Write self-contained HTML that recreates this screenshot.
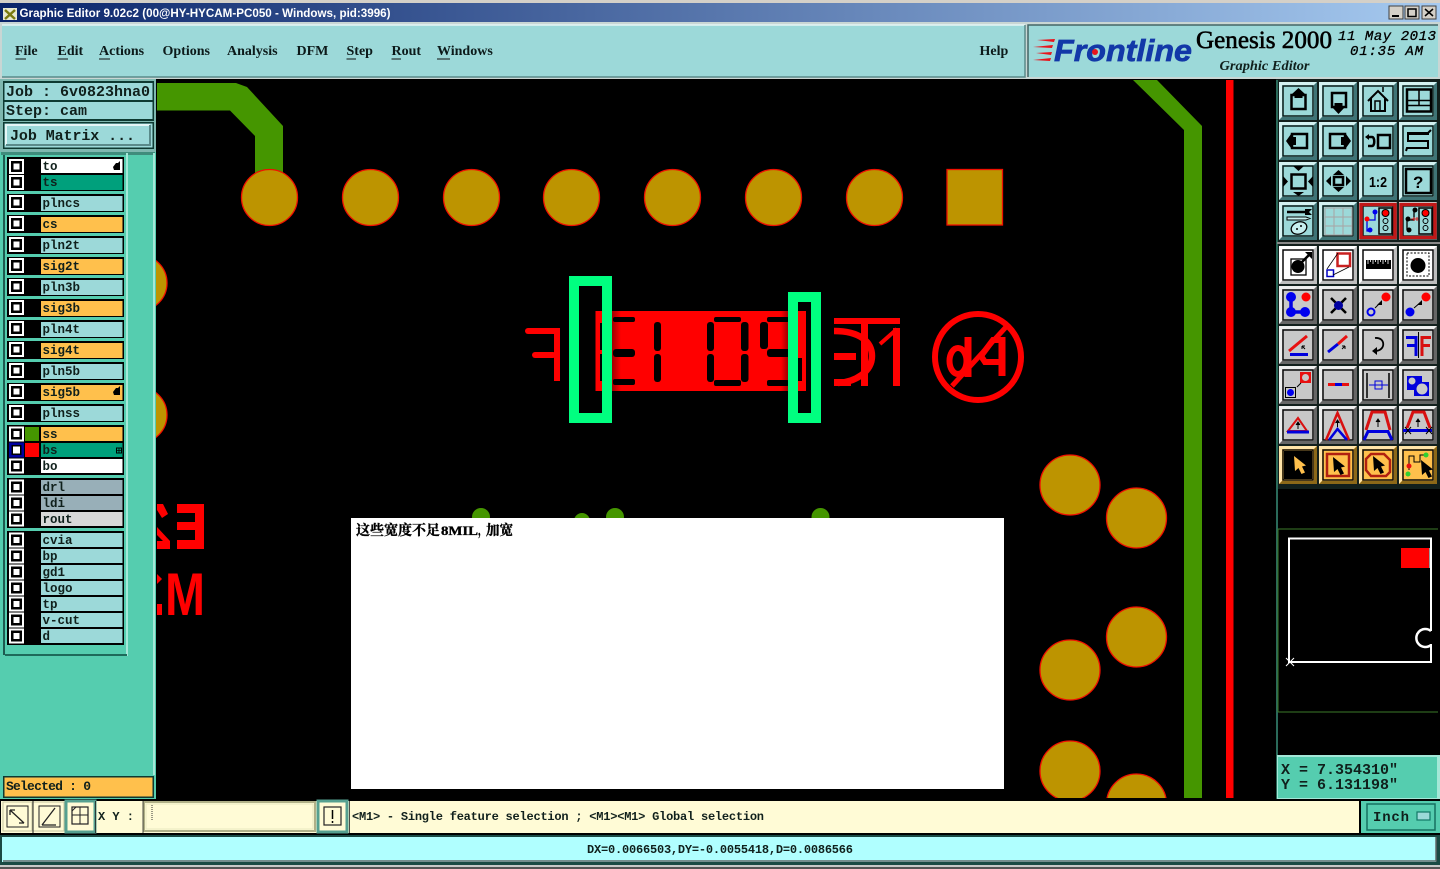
<!DOCTYPE html>
<html><head><meta charset="utf-8"><title>Graphic Editor</title>
<style>
html,body{margin:0;padding:0;background:#000;width:1440px;height:869px;overflow:hidden}
svg{display:block;position:absolute;left:0;top:0}
.m{font-family:"Liberation Mono","Noto Sans CJK SC",monospace;font-weight:bold;fill:#10201c}
.l{font-size:12.5px}
.s{font-family:"Liberation Serif",serif;font-weight:bold;font-size:14px;fill:#0c1a1a}
.p{fill:#bd9400;stroke:#f01000;stroke-width:1.3}
</style></head><body>
<svg width="1440" height="869" viewBox="0 0 1440 869" xmlns="http://www.w3.org/2000/svg">
<defs>
<linearGradient id="tb" x1="0" x2="1" y1="0" y2="0"><stop offset="0" stop-color="#0a246a"/><stop offset="1" stop-color="#a6caf0"/></linearGradient>
<linearGradient id="sh1" x1="0" x2="1" y1="0" y2="0"><stop offset="0" stop-color="#a00000"/><stop offset="1" stop-color="#ff0000"/></linearGradient>
<linearGradient id="sh2" x1="1" x2="0" y1="0" y2="0"><stop offset="0" stop-color="#a00000"/><stop offset="1" stop-color="#ff0000"/></linearGradient>
<g id="cb"><rect width="15" height="15" fill="#fff"/><rect x="2" y="2" width="11" height="11" fill="#000"/><rect x="4.500" y="4.500" width="6" height="6" fill="#fff"/></g>
<g id="bt"><rect width="38" height="38" fill="#9cd9d9"/><path d="M0 0H38L35 3H3V35L0 38Z" fill="#d4f2f2"/><path d="M38 38H0L3 35H35V3L38 0Z" fill="#3f7476"/><rect x="4" y="4" width="30" height="30" fill="none" stroke="#0a1a18" stroke-width="1.500"/></g>
<g id="bg"><rect width="38" height="38" fill="#c8c8c8"/><path d="M0 0H38L35 3H3V35L0 38Z" fill="#eeeeee"/><path d="M38 38H0L3 35H35V3L38 0Z" fill="#666"/><rect x="4" y="4" width="30" height="30" fill="none" stroke="#0a0a0a" stroke-width="1.500"/></g>
<g id="bw"><rect width="38" height="38" fill="#fff"/><path d="M38 38H0L3 35H35V3L38 0Z" fill="#bdbdbd"/><rect x="4" y="4" width="30" height="30" fill="none" stroke="#0a0a0a" stroke-width="1.500"/></g>
<g id="bo"><rect width="38" height="38" fill="#ffc04c"/><path d="M0 0H38L35 3H3V35L0 38Z" fill="#ffe4a8"/><path d="M38 38H0L3 35H35V3L38 0Z" fill="#8c6818"/><rect x="4" y="4" width="30" height="30" fill="none" stroke="#0a0a0a" stroke-width="1.500"/></g>
<path id="cur" d="M0 0L1 15L4.500 12L7.500 18L11 16.500L8 10.500L12 9.500Z"/>
</defs>

<!-- window chrome -->
<rect width="1440" height="869" fill="#d4d0c8"/>
<rect x="0" y="3" width="1440" height="19" fill="url(#tb)"/>
<rect x="3" y="8" width="14" height="12" fill="#e8e8d0"/><path d="M5 10L15 19M15 10L5 19" stroke="#7a7a10" stroke-width="2.500"/>
<text x="19.500" y="17" font-family="Liberation Sans,sans-serif" font-weight="bold" font-size="11.500" fill="#fff" textLength="371" lengthAdjust="spacingAndGlyphs">Graphic Editor 9.02c2 (00@HY-HYCAM-PC050 - Windows, pid:3996)</text>
<g fill="#d4d0c8" stroke="#404040" stroke-width="1">
<rect x="1389" y="6" width="14" height="13"/><rect x="1405" y="6" width="14" height="13"/><rect x="1422" y="6" width="14" height="13"/></g>
<path d="M1392 16H1399" stroke="#000" stroke-width="2"/><rect x="1408" y="9" width="8" height="7.500" fill="none" stroke="#000" stroke-width="1.500"/><path d="M1425 9L1433 16M1433 9L1425 16" stroke="#000" stroke-width="1.500"/>

<!-- menu bar -->
<rect x="0" y="22" width="1440" height="58" fill="#c9d6d4"/>
<rect x="2" y="25" width="1023" height="52" fill="#9cd9d9"/>
<path d="M2 25H1025" stroke="#e4f6f6" stroke-width="1.500"/>
<path d="M2 77H1025V25" stroke="#5a8a8a" fill="none" stroke-width="1.500"/>
<rect x="1028" y="25" width="410" height="52" fill="#9cd9d9"/>
<path d="M1028 77V25H1438" stroke="#466" fill="none" stroke-width="1.500"/>
<g class="s">
<text class="s" x="15" y="55">File</text><path d="M15.500 59H26" stroke="#111"/>
<text class="s" x="57.500" y="55">Edit</text><path d="M57.500 59H68" stroke="#111"/>
<text class="s" x="99" y="55">Actions</text><path d="M99 59H110" stroke="#111"/>
<text class="s" x="162.500" y="55">Options</text>
<text class="s" x="227" y="55">Analysis</text>
<text class="s" x="296.500" y="55">DFM</text>
<text class="s" x="346.500" y="55">Step</text><path d="M346.500 59H356" stroke="#111"/>
<text class="s" x="391.500" y="55">Rout</text><path d="M391.500 59H401" stroke="#111"/>
<text class="s" x="437" y="55">Windows</text><path d="M437 59H450" stroke="#111"/>
<text class="s" x="979.500" y="55">Help</text>
</g>
<!-- logo -->
<g fill="#e8141c"><polygon points="1037,40 1055,39 1054,42"/><polygon points="1033,47 1053,45 1052,48"/><polygon points="1036,53 1052,52 1051,55"/><polygon points="1033,60 1051,58 1050,61"/></g>
<text x="1054" y="61" font-family="Liberation Sans,sans-serif" font-weight="bold" font-style="italic" font-size="31" fill="#1238a8" stroke="#1238a8" stroke-width=".7" textLength="138" lengthAdjust="spacingAndGlyphs">Frontline</text>
<circle cx="1095" cy="52" r="3" fill="#e8141c"/>
<text x="1196" y="48" font-family="Liberation Serif,serif" font-size="25" fill="#000" stroke="#000" stroke-width=".6" textLength="136" lengthAdjust="spacingAndGlyphs">Genesis 2000</text>
<text x="1219.500" y="70" font-family="Liberation Serif,serif" font-weight="bold" font-style="italic" font-size="14" fill="#10201c" textLength="90" lengthAdjust="spacingAndGlyphs">Graphic Editor</text>
<text x="1338" y="40" font-family="Liberation Mono,monospace" font-style="italic" font-size="14" fill="#000" stroke="#000" stroke-width=".3" textLength="98">11 May 2013</text>
<text x="1350" y="55" font-family="Liberation Mono,monospace" font-style="italic" font-size="14" fill="#000" stroke="#000" stroke-width=".3" textLength="73">01:35 AM</text>

<!-- canvas -->
<rect x="0" y="79" width="1440" height="722" fill="#000"/>
<polygon points="157,83 236,83 247,87 283,126 283,178 255,178 255,136 230,110.500 157,110.500" fill="#459600"/>
<polygon points="1133,80 1157,80 1202,126 1202,798 1184,798 1184,130" fill="#459600"/>
<rect x="1226" y="80" width="7.500" height="718" fill="#ff0000"/>
<circle class="p" cx="269.500" cy="197.500" r="28"/><circle class="p" cx="370.500" cy="197.500" r="28"/><circle class="p" cx="471.500" cy="197.500" r="28"/><circle class="p" cx="571.500" cy="197.500" r="28"/><circle class="p" cx="672.500" cy="197.500" r="28"/><circle class="p" cx="773.500" cy="197.500" r="28"/><circle class="p" cx="874.500" cy="197.500" r="28"/>
<rect class="p" x="947" y="169.500" width="55.500" height="55.500"/>
<circle class="p" cx="139" cy="283" r="28"/><circle class="p" cx="139" cy="415" r="28"/>
<circle class="p" cx="1070" cy="485" r="30"/><circle class="p" cx="1136.500" cy="518" r="30"/><circle class="p" cx="1136.500" cy="637" r="30"/><circle class="p" cx="1070" cy="670" r="30"/><circle class="p" cx="1070" cy="771" r="30"/><circle class="p" cx="1136.500" cy="804" r="30"/>
<rect x="1040" y="798" width="130" height="4" fill="#000"/>
<circle cx="481" cy="517" r="9" fill="#459600"/><circle cx="582" cy="521" r="8" fill="#459600"/><circle cx="615" cy="517" r="9" fill="#459600"/><circle cx="820.500" cy="517" r="9" fill="#459600"/>

<!-- silkscreen -->
<rect x="595.500" y="311" width="210.500" height="80" fill="#ff0000"/>
<rect x="612" y="311" width="9" height="80" fill="url(#sh1)"/><rect x="781" y="311" width="7" height="80" fill="url(#sh2)"/>
<g fill="#000">
<rect x="613" y="317" width="22" height="5" rx="2"/><rect x="613" y="349" width="22" height="8" rx="3"/><rect x="613" y="379" width="22" height="6" rx="2"/>
<rect x="600" y="323" width="4" height="27"/><rect x="600" y="354" width="4" height="27"/>
<rect x="654" y="322" width="7" height="29" rx="3"/><rect x="654" y="354" width="7" height="28" rx="3"/>
<rect x="707" y="322" width="7" height="29" rx="3"/><rect x="707" y="354" width="7" height="28" rx="3"/>
<rect x="741" y="322" width="7.500" height="29" rx="3"/><rect x="741" y="354" width="7.500" height="28" rx="3"/>
<rect x="714" y="317" width="27" height="5" rx="2"/><rect x="714" y="380" width="27" height="6" rx="2"/>
<rect x="767" y="317" width="22" height="5" rx="2"/><rect x="760" y="322" width="8" height="27" rx="3"/><rect x="767" y="349" width="30" height="8" rx="3"/><rect x="767" y="380" width="22" height="6" rx="2"/><rect x="798" y="358" width="4" height="23"/>
</g>
<rect x="574" y="281" width="33" height="137" fill="none" stroke="#00ff80" stroke-width="10"/>
<rect x="793" y="297" width="23" height="121" fill="none" stroke="#00ff80" stroke-width="10"/>
<g fill="#ff0000">
<rect x="525" y="328" width="35" height="6" rx="3"/><rect x="532" y="352" width="24" height="6" rx="3"/><rect x="554" y="328" width="6" height="53"/>
<rect x="834" y="318" width="66" height="6"/><rect x="834" y="353" width="22" height="7"/><rect x="834" y="379" width="17" height="7"/><rect x="861" y="324" width="7" height="62"/><rect x="893" y="328" width="7" height="58"/>
</g>
<path d="M834 331C860 331 872 342 872 356C872 372 855 382 838 383" fill="none" stroke="#ff0000" stroke-width="6.500"/>
<path d="M880 344L897 329" stroke="#ff0000" stroke-width="4"/>
<circle cx="978" cy="357" r="43" fill="none" stroke="#ff0000" stroke-width="6"/>
<path d="M1006 327L952 386" stroke="#ff0000" stroke-width="5"/>
<path d="M968 337V377" stroke="#ff0000" stroke-width="7"/>
<ellipse cx="958" cy="361" rx="8.500" ry="13" fill="none" stroke="#ff0000" stroke-width="6"/>
<path d="M1002 337V376" stroke="#ff0000" stroke-width="7"/>
<path d="M1002 340H993L981 356L985 362H1002" fill="none" stroke="#ff0000" stroke-width="6"/>
<g fill="#ff0000">
<rect x="177" y="504" width="27" height="9"/><rect x="177" y="522" width="27" height="8"/><rect x="177" y="540" width="27" height="9"/><rect x="195" y="504" width="9" height="45"/>
<polygon points="157,574 162,579 157,584"/><rect x="157" y="604" width="5" height="11"/>
<polygon points="157,504 163,504 168,514 162,518 157,510"/>
<polygon points="157,527 170,541 170,549 157,549 157,541 163,541 157,535"/>
</g>
<text x="165" y="615" font-family="Liberation Sans,sans-serif" font-weight="bold" font-size="60" fill="#ff0000" textLength="40" lengthAdjust="spacingAndGlyphs">M</text>

<!-- popup -->
<rect x="351" y="518" width="653" height="271" fill="#fff"/>
<g font-family="Liberation Serif,'Noto Serif CJK SC',serif" font-weight="bold" font-size="14" fill="#000" stroke="#000" stroke-width=".35">
<text x="356" y="535" textLength="84" lengthAdjust="spacingAndGlyphs">这些宽度不足</text>
<text x="441" y="535" font-size="13" textLength="37" lengthAdjust="spacingAndGlyphs">8MIL</text>
<text x="478" y="535" textLength="9" lengthAdjust="spacingAndGlyphs">，</text>
<text x="486" y="535" textLength="27" lengthAdjust="spacingAndGlyphs">加宽</text>
</g>

<!-- left panel -->
<rect x="0" y="79" width="156" height="722" fill="#55cdaf"/>
<rect x="0" y="79" width="156" height="73" fill="#7fb8b0"/>
<rect x="3" y="81" width="151" height="40" fill="#0e3a32"/>
<rect x="4.500" y="83" width="148" height="17" fill="#9cd9d9"/><rect x="4.500" y="102" width="148" height="17" fill="#9cd9d9"/>
<text class="m" x="6" y="96" font-size="15" textLength="144">Job : 6v0823hna0</text>
<text class="m" x="6" y="115" font-size="15" textLength="81">Step: cam</text>
<rect x="3" y="122" width="151" height="27" fill="#0e3a32"/><rect x="4.500" y="123.500" width="148" height="24" fill="#9cd9d9"/>
<rect x="6" y="125" width="144" height="20" fill="#9cd9d9"/><path d="M6 145V125H150" stroke="#e4f6f6" stroke-width="2" fill="none"/><path d="M6 145H150V125" stroke="#5a8a8a" stroke-width="2" fill="none"/>
<text class="m" x="10" y="140" font-size="15" textLength="125">Job Matrix ...</text>
<rect x="1" y="152" width="154" height="3" fill="#3f8c7c"/>
<rect x="3" y="155" width="2" height="500" fill="#1e5a50"/>
<rect x="126" y="153" width="2" height="503" fill="#a4e8d8"/>
<rect x="153" y="153" width="2" height="622" fill="#a4e8d8"/>
<rect x="5" y="654" width="122" height="2" fill="#1e6a5a"/>

<g fill="#000">
<rect x="7" y="157" width="117" height="34"/>
<rect x="7" y="194" width="117" height="18"/><rect x="7" y="215" width="117" height="18"/><rect x="7" y="236" width="117" height="18"/><rect x="7" y="257" width="117" height="18"/><rect x="7" y="278" width="117" height="18"/><rect x="7" y="299" width="117" height="18"/><rect x="7" y="320" width="117" height="18"/><rect x="7" y="341" width="117" height="18"/><rect x="7" y="362" width="117" height="18"/><rect x="7" y="383" width="117" height="18"/><rect x="7" y="404" width="117" height="18"/>
<rect x="7" y="425" width="117" height="50"/><rect x="7" y="478" width="117" height="50"/><rect x="7" y="531" width="117" height="114"/>
</g>
<g>
<rect x="41" y="159" width="81.500" height="14" fill="#fff"/><rect x="41" y="175" width="81.500" height="15" fill="#00a07c"/>
<rect x="41" y="196" width="81.500" height="15" fill="#9cd9d9"/><rect x="41" y="217" width="81.500" height="15" fill="#ffc04c"/><rect x="41" y="238" width="81.500" height="15" fill="#9cd9d9"/><rect x="41" y="259" width="81.500" height="15" fill="#ffc04c"/><rect x="41" y="280" width="81.500" height="15" fill="#9cd9d9"/><rect x="41" y="301" width="81.500" height="15" fill="#ffc04c"/><rect x="41" y="322" width="81.500" height="15" fill="#9cd9d9"/><rect x="41" y="343" width="81.500" height="15" fill="#ffc04c"/><rect x="41" y="364" width="81.500" height="15" fill="#9cd9d9"/><rect x="41" y="385" width="81.500" height="15" fill="#ffc04c"/><rect x="41" y="406" width="81.500" height="15" fill="#9cd9d9"/>
<rect x="41" y="427" width="81.500" height="14" fill="#ffc04c"/><rect x="41" y="443" width="81.500" height="14" fill="#00a07c"/><rect x="41" y="459" width="81.500" height="14" fill="#fff"/>
<rect x="41" y="480" width="81.500" height="14" fill="#98afb8"/><rect x="41" y="496" width="81.500" height="14" fill="#98afb8"/><rect x="41" y="512" width="81.500" height="14" fill="#d8d8d8"/>
<rect x="41" y="533" width="81.500" height="14" fill="#9cd9d9"/><rect x="41" y="549" width="81.500" height="14" fill="#9cd9d9"/><rect x="41" y="565" width="81.500" height="14" fill="#9cd9d9"/><rect x="41" y="581" width="81.500" height="14" fill="#9cd9d9"/><rect x="41" y="597" width="81.500" height="14" fill="#9cd9d9"/><rect x="41" y="613" width="81.500" height="14" fill="#9cd9d9"/><rect x="41" y="629" width="81.500" height="14" fill="#9cd9d9"/>
<rect x="25" y="427" width="14" height="14" fill="#459600"/><rect x="25" y="443" width="14" height="14" fill="#ff0000"/>
</g>
<use href="#cb" x="9" y="159"/><use href="#cb" x="9" y="175"/><use href="#cb" x="9" y="195"/><use href="#cb" x="9" y="216"/><use href="#cb" x="9" y="237"/><use href="#cb" x="9" y="258"/><use href="#cb" x="9" y="279"/><use href="#cb" x="9" y="300"/><use href="#cb" x="9" y="321"/><use href="#cb" x="9" y="342"/><use href="#cb" x="9" y="363"/><use href="#cb" x="9" y="384"/><use href="#cb" x="9" y="405"/>
<use href="#cb" x="9" y="426.500"/><use href="#cb" x="9" y="442.500"/><use href="#cb" x="9" y="458.500"/>
<rect x="9" y="442.500" width="15" height="15" fill="#0000a0"/><rect x="11.500" y="445" width="10" height="10" fill="#000"/><rect x="13" y="446.500" width="7" height="7" fill="#fff"/>
<use href="#cb" x="9" y="479.500"/><use href="#cb" x="9" y="495.500"/><use href="#cb" x="9" y="511.500"/>
<use href="#cb" x="9" y="532.500"/><use href="#cb" x="9" y="548.500"/><use href="#cb" x="9" y="564.500"/><use href="#cb" x="9" y="580.500"/><use href="#cb" x="9" y="596.500"/><use href="#cb" x="9" y="612.500"/><use href="#cb" x="9" y="628.500"/>
<g class="m l">
<text x="42.500" y="170">to</text><text x="42.500" y="186">ts</text><text x="42.500" y="207">plncs</text><text x="42.500" y="228">cs</text><text x="42.500" y="249">pln2t</text><text x="42.500" y="270">sig2t</text><text x="42.500" y="291">pln3b</text><text x="42.500" y="312">sig3b</text><text x="42.500" y="333">pln4t</text><text x="42.500" y="354">sig4t</text><text x="42.500" y="375">pln5b</text><text x="42.500" y="396">sig5b</text><text x="42.500" y="417">plnss</text>
<text x="42.500" y="438">ss</text><text x="42.500" y="454">bs</text><text x="42.500" y="470">bo</text>
<text x="42.500" y="491">drl</text><text x="42.500" y="507">ldi</text><text x="42.500" y="523">rout</text>
<text x="42.500" y="544">cvia</text><text x="42.500" y="560">bp</text><text x="42.500" y="576">gd1</text><text x="42.500" y="592">logo</text><text x="42.500" y="608">tp</text><text x="42.500" y="624">v-cut</text><text x="42.500" y="640">d</text>
</g>
<path d="M113 167L116 163L118 163L120 161V170H114Z" fill="#000"/><path d="M113 392L116 388L118 388L120 386V395H114Z" fill="#000"/>
<rect x="116.500" y="448" width="5" height="5" fill="none" stroke="#000"/><path d="M119 448V453M116.500 450.500H121" stroke="#000" stroke-width=".8"/>
<rect x="3" y="776" width="151" height="22" fill="#0e3a32"/><rect x="4.500" y="777.500" width="148" height="19" fill="#ffc04c"/>
<text class="m" x="6" y="790" font-size="13" textLength="85">Selected : 0</text>

<!-- right toolbar -->
<rect x="1276" y="79" width="164" height="410" fill="#121f1c"/>
<rect x="1276" y="80" width="2" height="720" fill="#2a6a5a"/>
<use href="#bt" x="1279" y="82"/><use href="#bt" x="1319" y="82"/><use href="#bt" x="1359" y="82"/><use href="#bt" x="1399" y="82"/>
<use href="#bt" x="1279" y="122"/><use href="#bt" x="1319" y="122"/><use href="#bt" x="1359" y="122"/><use href="#bt" x="1399" y="122"/>
<use href="#bt" x="1279" y="162"/><use href="#bt" x="1319" y="162"/><use href="#bt" x="1359" y="162"/><use href="#bt" x="1399" y="162"/>
<use href="#bt" x="1279" y="202"/><use href="#bt" x="1319" y="202"/><use href="#bt" x="1359" y="202"/><use href="#bt" x="1399" y="202"/>
<rect x="1277" y="242" width="163" height="2" fill="#888"/>
<use href="#bw" x="1279" y="246"/><use href="#bw" x="1319" y="246"/><use href="#bw" x="1359" y="246"/><use href="#bw" x="1399" y="246"/>
<use href="#bg" x="1279" y="286"/><use href="#bg" x="1319" y="286"/><use href="#bg" x="1359" y="286"/><use href="#bg" x="1399" y="286"/>
<use href="#bg" x="1279" y="326"/><use href="#bg" x="1319" y="326"/><use href="#bg" x="1359" y="326"/><use href="#bg" x="1399" y="326"/>
<use href="#bg" x="1279" y="366"/><use href="#bg" x="1319" y="366"/><use href="#bg" x="1359" y="366"/><use href="#bg" x="1399" y="366"/>
<use href="#bg" x="1279" y="406"/><use href="#bg" x="1319" y="406"/><use href="#bg" x="1359" y="406"/><use href="#bg" x="1399" y="406"/>
<use href="#bo" x="1279" y="446"/><use href="#bo" x="1319" y="446"/><use href="#bo" x="1359" y="446"/><use href="#bo" x="1399" y="446"/>

<g fill="none" stroke="#000" stroke-width="2.500">
<!-- row 1 -->
<rect x="1291.500" y="95" width="14" height="14"/><path d="M1298.500 88L1305 94H1302.500V98H1294.500V94H1292Z" fill="#000" stroke="none"/>
<rect x="1332" y="93" width="14" height="14"/><path d="M1334.500 103H1342.500V107H1345L1338.500 114L1332 107H1334.500Z" fill="#000" stroke="none"/>
<path d="M1368 101L1378 91L1388 101M1371 98V111H1385V98" stroke-width="2"/><rect x="1375" y="101" width="5" height="10" stroke-width="1.500"/><path d="M1383 92V87" stroke-width="1.500"/>
<rect x="1407" y="89.500" width="24" height="22"/><path d="M1419 90V105M1407 100.500H1431M1407 105.500H1431" stroke-width="1.500"/>
<!-- row 2 -->
<rect x="1292" y="134" width="15" height="14"/><path d="M1296 137H1291V134L1286 141L1291 148V145H1296Z" fill="#000" stroke="none"/>
<rect x="1330" y="134" width="15" height="14"/><path d="M1341 137H1346V134L1351 141L1346 148V145H1341Z" fill="#000" stroke="none"/>
<rect x="1378" y="135" width="12" height="13"/><path d="M1367 137H1372C1375 137 1375 146 1372 146H1368" stroke-width="2.500"/><path d="M1369 134V140L1365 137Z" fill="#000" stroke="none"/>
<path d="M1407 133H1428L1431 130M1428 133V134H1408V141H1428V148H1407L1406 151" stroke-width="2"/>
<!-- row 3 -->
<rect x="1291.500" y="174.500" width="14" height="14"/><path d="M1293 166H1304L1298.500 171ZM1293 192H1304L1298.500 196ZM1283 176V187L1288 181.500ZM1313 176V187L1308 181.500Z" fill="#000" stroke="none"/>
<rect x="1334" y="177" width="9" height="8"/><path d="M1333 175L1338.500 170L1344 175ZM1333 187L1338.500 192L1344 187ZM1331 176L1326 181L1331 186ZM1346 176L1351 181L1346 186Z" fill="#000" stroke="none"/>
<rect x="1406" y="169" width="25" height="24"/>
</g>
<text x="1369" y="187" font-family="Liberation Sans,sans-serif" font-weight="bold" font-size="15" fill="#000" textLength="18" lengthAdjust="spacingAndGlyphs">1:2</text>
<text x="1413" y="188" font-family="Liberation Sans,sans-serif" font-weight="bold" font-size="17" fill="#000">?</text>
<!-- row 4 -->
<path d="M1287 212H1305" stroke="#000" stroke-width="2.500"/><path d="M1305 209H1312L1309 212L1312 215H1305Z" fill="#000"/>
<path d="M1287 217H1306L1310 218.500L1306 220H1287Z" fill="#c6eeee" stroke="#000"/>
<ellipse cx="1299" cy="228" rx="8" ry="6" fill="#c6eeee" stroke="#000" stroke-width="1.300" transform="rotate(-20 1299 228)"/>
<circle cx="1297" cy="229" r="1" fill="#000"/><circle cx="1301" cy="226" r="1" fill="#000"/>
<g stroke="#a8a4a4" stroke-width="1" fill="none"><rect x="1325" y="208" width="27" height="27"/><path d="M1334 208V235M1343 208V235M1325 217H1352M1325 226H1352"/></g>
<rect x="1361" y="204.500" width="34" height="33" fill="none" stroke="#c01818" stroke-width="3.500"/>
<rect x="1401" y="204.500" width="34" height="33" fill="none" stroke="#c01818" stroke-width="3.500"/>
<path d="M1375 213V220H1367V231H1372" stroke="#0000e0" stroke-width="1.300" fill="none"/>
<circle cx="1375" cy="212" r="2.500" fill="#00e"/><circle cx="1367" cy="219" r="2.500" fill="#f00"/><circle cx="1370" cy="230" r="2.500" fill="#00e"/>
<rect x="1379" y="208" width="13" height="26" fill="none" stroke="#000" stroke-width="1.500"/><circle cx="1385.500" cy="213" r="3.500" fill="#f00" stroke="#000"/><circle cx="1385.500" cy="221" r="2.500" fill="none" stroke="#000"/><circle cx="1385.500" cy="228" r="2.500" fill="none" stroke="#000"/>
<path d="M1414 211V220H1407V230" stroke="#000" stroke-width="1.300" fill="none"/>
<circle cx="1415" cy="210" r="2.500" fill="#000"/><circle cx="1408" cy="219" r="2.500" fill="#000"/><circle cx="1409" cy="230" r="2.500" fill="#000"/>
<path d="M1411 219H1419M1414 217V221M1417 217V221" stroke="#d02020"/>
<rect x="1419" y="208" width="13" height="26" fill="none" stroke="#000" stroke-width="1.500"/><circle cx="1425.500" cy="213" r="3.500" fill="#f00" stroke="#000"/><circle cx="1425.500" cy="221" r="2.500" fill="none" stroke="#000"/><circle cx="1425.500" cy="228" r="2.500" fill="none" stroke="#000"/>
<!-- row 5 -->
<rect x="1291" y="259" width="15" height="16" fill="none" stroke="#000" stroke-width="1.300"/><circle cx="1298" cy="266.500" r="6.500" fill="#000"/><path d="M1302 262L1310 254" stroke="#000" stroke-width="2.500"/><path d="M1305 252H1312V259Z" fill="#000"/>
<rect x="1337.500" y="253.500" width="12.500" height="12.500" fill="none" stroke="#c82020" stroke-width="2.500"/><rect x="1327" y="270" width="6.500" height="6.500" fill="none" stroke="#0000c0" stroke-width="1.500"/><path d="M1327 269L1338 253M1333 275L1349 267" stroke="#000" stroke-width=".8"/>
<path d="M1366 260H1391V269H1366Z" fill="#000"/><path d="M1368 259V264M1370.500 259V262M1373 259V264M1375.500 259V262M1378 259V264M1380.500 259V262M1383 259V264M1385.500 259V262M1388 259V264" stroke="#fff" stroke-width=".8"/>
<rect x="1407" y="253" width="22" height="23" fill="none" stroke="#000" stroke-dasharray="2 1.500"/><circle cx="1418" cy="265.500" r="7.500" fill="#000"/>
<!-- row 6 -->
<path d="M1291 297V312H1305" stroke="#0000e0" stroke-width="3.500" fill="none"/><circle cx="1291" cy="297" r="5" fill="#00e"/><circle cx="1291" cy="312" r="5" fill="#00e"/><circle cx="1305" cy="312" r="5" fill="#00e"/><circle cx="1306" cy="297" r="4.500" fill="#f00"/>
<path d="M1331 298L1346 313M1346 298L1331 313" stroke="#000" stroke-width="2.500"/><circle cx="1338.500" cy="305.500" r="4.500" fill="#0000a0"/>
<circle cx="1371" cy="312" r="3.500" fill="none" stroke="#00e" stroke-width="2"/><circle cx="1386" cy="297" r="4.500" fill="#f00"/><path d="M1375 308L1381 302" stroke="#000"/><path d="M1382 300V305H1377Z" fill="#000"/>
<circle cx="1410" cy="312" r="4.500" fill="#00e"/><circle cx="1426" cy="297" r="4.500" fill="#f00"/><path d="M1414 308L1421 302" stroke="#000"/><path d="M1422 300V305H1417Z" fill="#000"/>
<!-- row 7 -->
<path d="M1289 351L1307 336" stroke="#e81010" stroke-width="3"/><path d="M1290 354.500H1308" stroke="#00d" stroke-width="3"/><path d="M1305 349L1302 346M1302 346V349M1302 346H1305" stroke="#000"/>
<path d="M1328 352L1338 344" stroke="#00d" stroke-width="3"/><path d="M1338 344L1347 336" stroke="#e81010" stroke-width="3"/><path d="M1342 349L1345 346M1345 346V349M1345 346H1342" stroke="#000"/>
<path d="M1375 338C1386 337 1386 351 1375 351" fill="none" stroke="#000" stroke-width="1.800"/><path d="M1377 347L1372 351L1377 355Z" fill="#000"/>
<path d="M1418.500 332V358" stroke="#000"/><path d="M1406 337.500H1416V356M1407 345.500H1415" fill="none" stroke="#00d" stroke-width="3"/><path d="M1431 337.500H1422V356M1422 345.500H1430" fill="none" stroke="#d81010" stroke-width="3"/>
<!-- row 8 -->
<rect x="1285.500" y="387.500" width="10" height="10" fill="none" stroke="#000"/><circle cx="1290.500" cy="392.500" r="3.500" fill="#00e"/><rect x="1300" y="372" width="11" height="11" fill="#e81010"/><circle cx="1305.500" cy="377.500" r="3.500" fill="#c8c8c8"/><path d="M1297 387L1301 383" stroke="#000"/>
<path d="M1328 384.500H1349" stroke="#e81010" stroke-width="3"/><path d="M1335 384.500H1342" stroke="#00d" stroke-width="3"/>
<path d="M1367 373V398M1389 373V398" stroke="#000" stroke-width="1.500"/><path d="M1369 385H1388" stroke="#00d"/><rect x="1375" y="381" width="7" height="8" fill="none" stroke="#00d"/>
<path d="M1407 376H1422V382H1429V396H1414V390H1407Z" fill="#00d"/><circle cx="1412" cy="381" r="3.500" fill="#c8c8c8"/><circle cx="1422" cy="389" r="5.500" fill="#c8c8c8"/>
<!-- row 9 -->
<path d="M1288 431L1298 418L1307 431Z" fill="none" stroke="#d81010" stroke-width="2"/><path d="M1287 432H1309" stroke="#00d" stroke-width="3"/><path d="M1298 422V429M1296 425L1298 422L1300 425" stroke="#000"/>
<path d="M1326 440L1337.500 413L1349 440" fill="none" stroke="#d81010" stroke-width="2.500"/><path d="M1329 440L1337.500 429L1347 440" fill="none" stroke="#00d" stroke-width="2.500"/><path d="M1337.500 420V427M1335.500 423L1337.500 420L1339.500 423" stroke="#000"/>
<path d="M1366 430L1372 412H1385L1390 430" fill="none" stroke="#d81010" stroke-width="3"/><path d="M1364 440L1368 431.500H1388L1392 440" fill="none" stroke="#00d" stroke-width="3"/><path d="M1378 419V427M1376 422L1378 419L1380 422" stroke="#000"/>
<path d="M1407 428L1413 412H1424L1430 428" fill="none" stroke="#d81010" stroke-width="3"/><path d="M1403 430.500H1432" stroke="#00d" stroke-width="3"/><path d="M1405 427L1411 434M1411 427L1405 434M1426 427L1432 434M1432 427L1426 434" stroke="#000"/><path d="M1418 419V427M1416 422L1418 419L1420 422" stroke="#000"/>
<!-- row 10 -->
<rect x="1284" y="451" width="28" height="28" fill="#000"/>
<use href="#cur" x="1294" y="456" fill="#ffc04c"/>
<rect x="1327" y="454" width="22" height="22" fill="none" stroke="#b02010" stroke-width="2.500"/>
<use href="#cur" x="1333" y="457" fill="#000"/>
<path d="M1371 454H1384L1390 460V472L1386 476H1371L1366 470V459Z" fill="none" stroke="#b02010" stroke-width="2.500"/>
<use href="#cur" x="1373" y="456" fill="#000"/>
<path d="M1409 470V456H1414V462H1420V455H1426" fill="none" stroke="#000"/><circle cx="1409" cy="466" r="2.500" fill="#e81010"/><circle cx="1426" cy="455" r="2.500" fill="#30d030"/><circle cx="1408" cy="474" r="2.500" fill="#30d030"/>
<use href="#cur" x="1421" y="460" fill="#000"/>

<!-- mini map -->
<rect x="1278" y="489" width="162" height="266" fill="#000"/>
<path d="M1278 529H1438M1278 712H1438M1278 529V712" stroke="#3d7a2a" fill="none"/>
<rect x="1401" y="548" width="28" height="20" fill="#ff0000"/><rect x="1429" y="548" width="3" height="20" fill="#999"/>
<path d="M1431 631V538.500H1289V662H1431V644" fill="none" stroke="#fff" stroke-width="2"/>
<path d="M1431 631A9 9 0 1 0 1431 645" fill="none" stroke="#fff" stroke-width="2.500"/>
<path d="M1286 658L1294 666M1294 658L1286 666" stroke="#fff"/>
<rect x="1277" y="755" width="163" height="45" fill="#a4e8d8"/>
<rect x="1278" y="757" width="159" height="41" fill="#55cdaf"/>
<text class="m" x="1281" y="774" font-size="15" textLength="117">X = 7.354310"</text>
<text class="m" x="1281" y="789" font-size="15" textLength="117">Y = 6.131198"</text>

<!-- command bar -->
<rect x="0" y="799" width="1440" height="35" fill="#000"/>
<rect x="1" y="801" width="1358" height="32" fill="#fffbd6"/>
<rect x="3" y="802" width="29" height="29" fill="#fffbd6" stroke="#c4c4a0"/><rect x="7" y="806" width="21" height="21" fill="none" stroke="#222"/>
<path d="M10 810L24 823M10 810V815M10 810H15M24 823H19" stroke="#222" fill="none" stroke-width="1.300"/>
<rect x="33" y="802" width="31" height="29" fill="#fffbd6" stroke="#c4c4a0"/><rect x="39" y="806" width="21" height="21" fill="none" stroke="#222"/>
<path d="M42 825L55 808M42 825H56" stroke="#222" stroke-width="1.300"/>
<rect x="32.500" y="801" width="1" height="32" fill="#222"/>
<rect x="66" y="801" width="29" height="31" fill="#fffbd6" stroke="#55a090" stroke-width="3"/>
<rect x="72" y="807" width="16" height="17" fill="none" stroke="#222" stroke-width="1.200"/><path d="M80 807V824M72 815H88M72 811L76 807" stroke="#222"/>
<text class="m" x="98" y="820" font-size="12">X Y :</text>
<rect x="144" y="802" width="171" height="29" fill="#fffbd6" stroke="#b0b088" stroke-width="2"/><rect x="146" y="804" width="167" height="25" fill="#fffbd6" stroke="#e8e8c0"/>
<path d="M152 805V820" stroke="#333" stroke-dasharray="1 1"/>
<rect x="318" y="801" width="29" height="31" fill="#fffbd6" stroke="#55a090" stroke-width="3"/>
<rect x="324" y="807" width="17" height="18" fill="none" stroke="#222" stroke-width="1.200"/><path d="M332.500 810V819M332.500 821V823" stroke="#000" stroke-width="1.500"/>
<path d="M349.500 801V833M143 801V833M95.500 801V833" stroke="#222" stroke-width=".8"/>
<text class="m" x="352" y="820" font-size="12" textLength="412">&lt;M1&gt; - Single feature selection ; &lt;M1&gt;&lt;M1&gt; Global selection</text>
<rect x="1361" y="801" width="79" height="32" fill="#55cdaf"/>
<rect x="1367" y="804" width="68" height="26" fill="#55cdaf" stroke="#167060" stroke-width="1.500"/>
<text class="m" x="1373" y="821" font-size="14" textLength="36">Inch</text>
<rect x="1417" y="812" width="13" height="8" fill="#9cd9d9" stroke="#176" stroke-width="1.200"/>

<!-- status bar -->
<rect x="0" y="834" width="1440" height="2" fill="#000"/>
<rect x="0" y="836" width="1440" height="33" fill="#d4d0c8"/>
<rect x="0" y="835" width="1440" height="30" fill="#1a4a44"/>
<rect x="2" y="837" width="1434" height="25" fill="#b0ffff"/>
<path d="M3 861H1436V837" stroke="#606868" fill="none" stroke-width="1.500"/>
<rect x="0" y="865" width="1440" height="2" fill="#c8c8c8"/><rect x="0" y="867" width="1440" height="2" fill="#555"/>
<text class="m" x="587" y="853" font-size="12" textLength="266">DX=0.0066503,DY=-0.0055418,D=0.0086566</text>
</svg>
</body></html>
